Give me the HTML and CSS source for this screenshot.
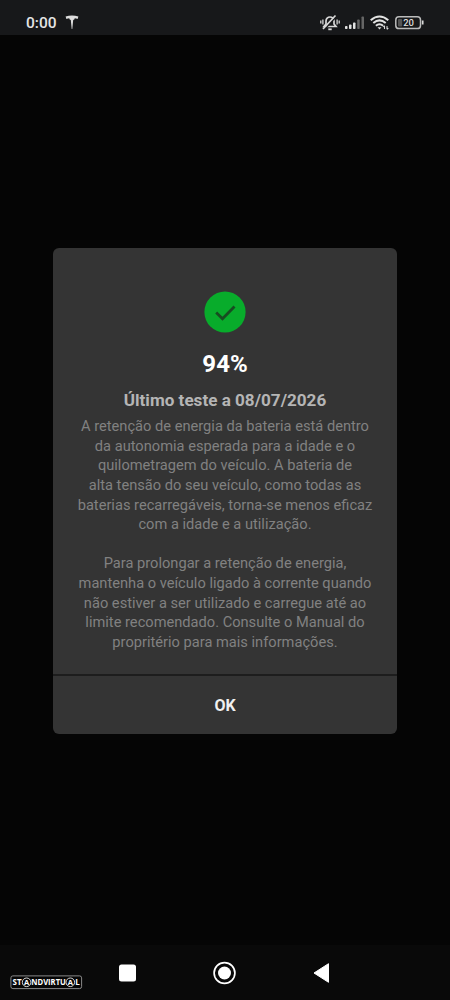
FILE: index.html
```html
<!DOCTYPE html>
<html lang="pt">
<head>
<meta charset="utf-8">
<title>Teste da bateria</title>
<link rel="stylesheet" href="styles.css">
</head>
<body>
<div class="screen">
  <header class="status">
    <span class="time">0:00</span>
    <svg class="tesla" width="14" height="15" viewBox="0 0 14 15"><path d="M.6 1.600Q7-.6 13.400 1.600L12.600 4Q11 3.300 9.800 3.300L9.300 4.500 8.200 5 7.300 14H6.700L5.800 5 4.700 4.500 4.200 3.300Q3 3.300 1.400 4Z" fill="#ddd"/></svg>
    <svg class="system" width="106" height="18" viewBox="0 0 106 18" fill="none" stroke="#d8d8d8">
      <path d="M4 12.500h12l-2-2.500V7a4 4 0 0 0-8 0v3z" stroke-width="1.700"/>
      <path d="M8.300 15.300h3.400" stroke-width="1.800"/>
      <path d="M.8 6.500v3M2.900 5.500v5M17.100 5.500v5M19.200 6.500v3" stroke-width="1.300"/>
      <path d="M4.300 15.800L15.800 3" stroke="#17181a" stroke-width="1.500"/>
      <path d="M3 15L15.500 1.500" stroke-width="1.700"/>
      <g stroke="none" fill="#e2e2e2"><rect x="25" y="12" width="2.500" height="3" rx=".8"/><rect x="29" y="10.500" width="2.500" height="4.500" rx=".8"/><rect x="33" y="8.500" width="2.500" height="6.500" rx=".8"/><g fill="#666"><rect x="37.200" y="5.500" width="2.500" height="9.500" rx=".8"/><rect x="41.500" y="2.500" width="2.500" height="12.500" rx=".8"/></g></g>
      <g stroke="#e2e2e2" stroke-width="2"><path d="M50.700 6.200Q59.500-1.200 68.300 6.200"/><path d="M53.300 9.100Q59.500 3.700 65.700 9.100"/><path d="M55.900 11.800Q59.500 8.800 63.100 11.800"/></g>
      <path d="M57.500 13.300h4L59.500 15.500z" fill="#e2e2e2" stroke="none"/>
      <path d="M64.500 15v-3M67 12v3M63.300 13l1.200-1.500M67 15.500l1.300-1.500" stroke-width="1.100"/>
      <rect x="75.800" y="2.800" width="24.700" height="11.800" rx="3.200" stroke="#bbb" stroke-width="1.500"/>
      <rect x="78" y="5" width="4.200" height="7.500" rx="1" fill="#555" stroke="none"/>
      <path d="M102.700 6.500v4" stroke-width="1.700"/>
      <text x="88.600" y="12.300" class="charge">20</text>
    </svg>
  </header>
  <main class="backdrop">
    <section class="dialog">
      <div class="content">
        <svg class="check" width="42" height="42" viewBox="0 0 42 42"><circle cx="21" cy="21" r="20.600" fill="#08ac2b"/><path d="M12.200 21.500l6.300 6.300L30.500 15.500" fill="none" stroke="#174d21" stroke-width="2.800"/></svg>
        <h1 class="percent">94%</h1>
        <h2 class="title">Último teste a 08/07/2026</h2>
        <p class="copy">A retenção de energia da bateria está dentro<br>da autonomia esperada para a idade e o<br>quilometragem do veículo. A bateria de<br>alta tensão do seu veículo, como todas as<br>baterias recarregáveis, torna-se menos eficaz<br>com a idade e a utilização.</p>
        <p class="copy">Para prolongar a retenção de energia,<br>mantenha o veículo ligado à corrente quando<br>não estiver a ser utilizado e carregue até ao<br>limite recomendado. Consulte o Manual do<br>propritério para mais informações.</p>
      </div>
      <div class="action"><span class="ok">OK</span></div>
    </section>
  </main>
  <footer class="nav">
    <svg class="watermark" width="74" height="15" viewBox="0 0 74 15"><rect x=".9" y=".9" width="70.700" height="12.700" rx="2" fill="#050505" stroke="#aaa" stroke-width=".8"/><g class="brand"><text x="2.500" y="10.200" textLength="9" lengthAdjust="spacingAndGlyphs">ST</text><text x="14" y="10" class="ring-a">A</text><text x="21.300" y="10.200" textLength="34.500" lengthAdjust="spacingAndGlyphs">NDVIRTU</text><text x="57.700" y="10" class="ring-a">A</text><text x="65.200" y="10.200">L</text></g><g fill="none" stroke="#eee" stroke-width=".9"><circle cx="16.600" cy="7.300" r="4.300"/><circle cx="60.300" cy="7.300" r="4.300"/></g></svg>
    <svg class="keys" width="212" height="26" viewBox="0 0 212 26"><rect x="1" y="4.500" width="17" height="17" rx="2.500" fill="#fff"/><circle cx="106.500" cy="13" r="10.400" fill="none" stroke="#fff" stroke-width="1.700"/><circle cx="106.500" cy="13" r="6.500" fill="#fff"/><path d="M196 13L210.500 3.700v18.600z" fill="#fff" stroke="#fff" stroke-linejoin="round"/></svg>
  </footer>
</div>
</body>
</html>
```
FILE: styles.css
```css
body { margin: 0; background: #050505; font-family: Roboto, sans-serif; }
.screen { width: 450px; height: 1000px; display: flex; flex-direction: column; overflow: hidden; }
.status { height: 35px; box-sizing: border-box; padding: 14px 24px 0 26px; display: flex; align-items: flex-start; background: #17181a; color: #e5e5e5; }
.time { font-size: 15.500px; line-height: 19px; font-weight: 500; }
.tesla { margin: 1px 0 0 8px; }
.system { margin-left: auto; }
.charge { font: 500 9.500px Roboto, sans-serif; text-anchor: middle; fill: #ddd; stroke: none; }
.backdrop { height: 910px; display: flex; flex-direction: column; align-items: center; background: #050505; }
.dialog { width: 344px; height: 486px; margin-top: 212.500px; border-radius: 6px; background: #343434; overflow: hidden; }
.content { height: 426px; display: flex; flex-direction: column; align-items: center; text-align: center; }
.check { margin-top: 43.500px; flex: none; }
.percent { margin: 16px 0 0; font-size: 24px; line-height: 30px; font-weight: 700; color: #fff; }
.title { margin: 11px 0 0; font-size: 17.100px; line-height: 20px; font-weight: 700; color: #b5b5b5; white-space: nowrap; }
.copy { margin: 7px 0 0; font-size: 14.650px; line-height: 19.620px; color: #818181; white-space: nowrap; }
.copy + .copy { margin-top: 19.620px; }
.action { height: 60px; box-sizing: border-box; border-top: 2px solid #1d1d1d; display: flex; justify-content: center; align-items: flex-start; }
.ok { margin-top: 20px; height: 15px; line-height: 20px; overflow: hidden; font-size: 16px; font-weight: 700; color: #f0f0f0; }
.nav { height: 55px; display: flex; align-items: flex-start; background: #090909; }
.watermark { margin: 30px 0 0 10px; }
.brand { font: 700 8px "Open Sans", sans-serif; fill: #fff; }
.ring-a { font-size: 7.500px; }
.keys { margin: 15px 0 0 34px; }
```
